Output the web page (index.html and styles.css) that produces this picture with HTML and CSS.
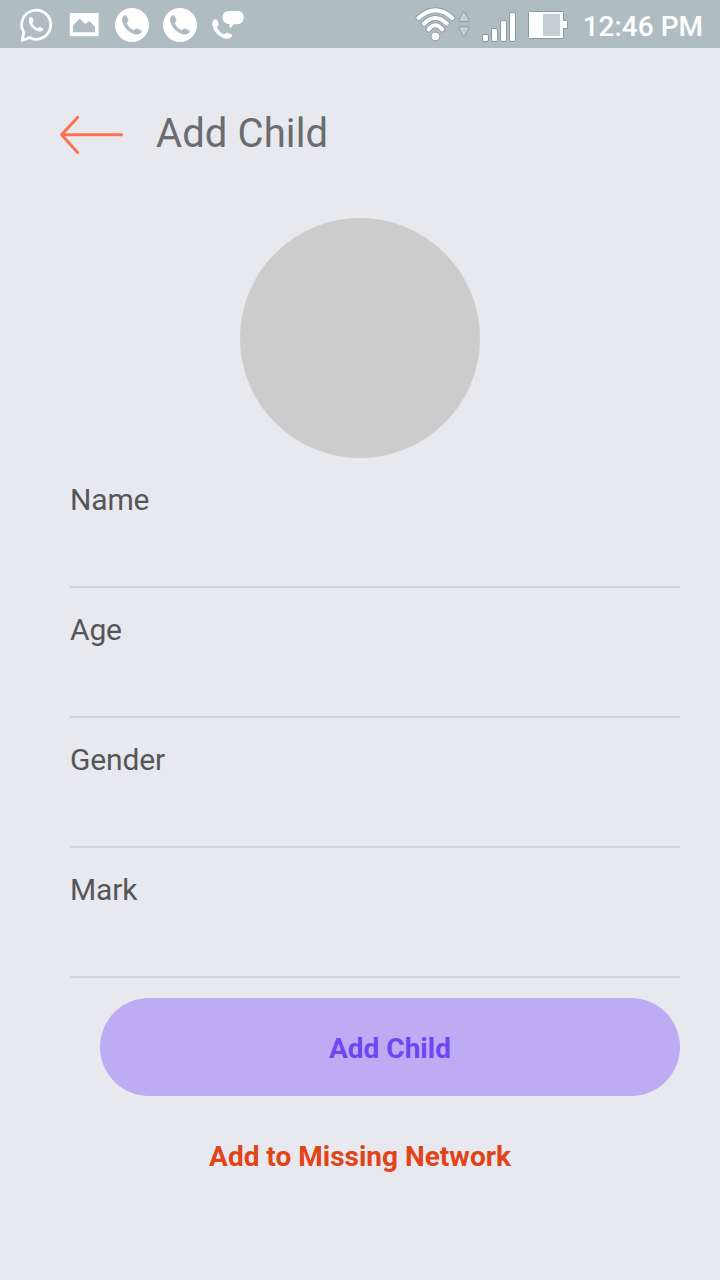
FILE: index.html
```html
<!DOCTYPE html>
<html lang="en">
<head>
<meta charset="utf-8">
<title>Add Child</title>
<link rel="stylesheet" href="styles.css">
</head>
<body>
<svg class="defs" width="0" height="0" aria-hidden="true">
  <symbol id="handset" viewBox="0 0 20 20">
    <path d="M1.8 .7Q4 -.5 4.9 1.4L6.3 4.6Q6.8 5.9 5.6 6.9Q4.5 7.8 5.1 9.1Q7.2 13.3 11 14.8Q12.3 15.2 13 14.3Q14 13.1 15.2 13.6L18.8 15.2Q20.2 16 19.2 17.6Q17.2 20.1 13.6 19.5C6.3 18-.1 10.3 0 4.5Q.1 1.7 1.8 .7Z"/>
  </symbol>
</svg>
<header class="status">
  <div class="status-group notices">
    <svg class="icon" width="36" height="38" viewBox="18 6 36 38">
      <path d="M23.8 32.2A14.5 14.5 0 1 1 29.6 37.6L22.2 40.3Z" fill="none" stroke="#fff" stroke-width="2.8" stroke-linejoin="round"/>
      <use href="#handset" x="28.5" y="16.8" width="15.4" height="15" fill="#fff"/>
    </svg>
    <svg class="icon" width="30" height="38" viewBox="69 6 30 38">
      <path fill="#fff" fill-rule="evenodd" d="M71 13H97.5Q98.7 13 98.7 14.2V35Q98.7 36.2 97.5 36.2H71Q69.8 36.2 69.8 35V14.2Q69.8 13 71 13ZM73 32.3H95V27L90.2 21.7Q89.2 20.8 88.2 21.7L85.2 24L80.7 19.4Q79.6 18.6 78.6 19.4L73 25.5Z"/>
    </svg>
    <svg class="icon" width="34" height="38" viewBox="115 6 34 38">
      <circle cx="132" cy="25" r="17" fill="#fff"/>
      <use href="#handset" x="122" y="15" width="20" height="20" fill="#afbdc2"/>
    </svg>
    <svg class="icon" width="34" height="38" viewBox="115 6 34 38">
      <circle cx="132" cy="25" r="17" fill="#fff"/>
      <use href="#handset" x="122" y="15" width="20" height="20" fill="#afbdc2"/>
    </svg>
    <svg class="icon" width="34" height="38" viewBox="211 6 34 38">
      <use href="#handset" x="212.2" y="19" width="20.2" height="20.2" fill="#fff"/>
      <path fill="#fff" d="M229 11H237.5Q243.7 11.3 243.7 17.4T237.5 24.2H234L229.8 28.2L229.4 24.2Q222.5 23.6 222.5 17.5T229 11Z"/>
    </svg>
  </div>
  <div class="status-group system">
    <svg class="icon" width="56" height="38" viewBox="415 6 56 38">
      <g fill="none" stroke-linecap="round">
        <g stroke="#899a9f" stroke-width="5.8">
          <path d="M418.5 17.9Q435.4 2.7 452.3 17.9"/><path d="M423.9 23.8Q435.4 12.2 446.9 23.8"/><path d="M428.6 29.4Q435.4 21.2 442.2 29.4"/>
        </g>
        <g stroke="#fff" stroke-width="4.1">
          <path d="M418.5 17.9Q435.4 2.7 452.3 17.9"/><path d="M423.9 23.8Q435.4 12.2 446.9 23.8"/><path d="M428.6 29.4Q435.4 21.2 442.2 29.4"/>
        </g>
      </g>
      <circle cx="435.4" cy="36.4" r="4.4" fill="#fff" stroke="#899a9f"/>
      <path d="M463 12Q463.8 11 464.6 12L469.2 20.4Q469.4 21.4 468.4 21.4H459.4Q458.4 21.4 458.6 20.4ZM463 36.2Q463.8 37.2 464.6 36.2L469.2 27.8Q469.4 26.8 468.4 26.8H459.4Q458.4 26.8 458.6 27.8Z" fill="#c5d0d4" stroke="#899a9f" stroke-linejoin="round"/>
    </svg>
    <svg class="icon signal" width="35" height="38" viewBox="481 6 35 38">
      <g fill="#fff" stroke="#899a9f">
        <rect x="482.5" y="34.5" width="6" height="7" rx="1.5"/>
        <rect x="491.5" y="28.5" width="6" height="13" rx="1.5"/>
        <rect x="500.5" y="20.5" width="6" height="21" rx="1.5"/>
        <rect x="509.5" y="12.5" width="6" height="29" rx="1.5"/>
      </g>
    </svg>
    <svg class="icon battery" width="41" height="38" viewBox="528 6 41 38">
      <path d="M529.5 11.5H562.5Q563.5 11.5 563.5 12.5V20.5H566.5Q567.5 20.5 567.5 21.5V28.5H563.5V37.5Q563.5 38.5 562.5 38.5H529.5Q528.5 38.5 528.5 37.5V12.5Q528.5 11.5 529.5 11.5Z" fill="#fff" stroke="#899a9f"/>
      <path d="M543 13.8H560V36H543Z" fill="#c5d0d4"/>
    </svg>
    <span class="clock">12:46 PM</span>
  </div>
</header>
<main class="screen">
  <div class="titlebar">
    <svg class="back" width="64" height="40" viewBox="60 115 64 40">
      <path d="M121.5 134.8H62M77.6 117.4L61.6 134.8L77.6 152.4" fill="none" stroke="#fb7253" stroke-width="3" stroke-linecap="round" stroke-linejoin="round"/>
    </svg>
    <h1 class="title">Add Child</h1>
  </div>
  <div class="avatar"></div>
  <form class="form">
    <div class="field">Name</div>
    <div class="field">Age</div>
    <div class="field">Gender</div>
    <div class="field">Mark</div>
    <button class="submit" type="button">Add Child</button>
  </form>
  <a class="missing">Add to Missing Network</a>
</main>
</body>
</html>
```
FILE: styles.css
```css
* { box-sizing: border-box; }
body {
  margin: 0;
  width: 720px;
  height: 1280px;
  overflow: hidden;
  background: #e8e9ee;
  font-family: Roboto, "Liberation Sans", sans-serif;
}
.defs { display: block; }
.status {
  display: flex;
  justify-content: space-between;
  height: 48px;
  padding: 6px 17px 0 18px;
  background: #afbdc2;
}
.status-group { display: flex; align-items: flex-start; }
.icon { display: block; flex: none; }
.notices { gap: 14px; }
.notices .icon:nth-child(2) { margin-left: 1px; }
.notices .icon:nth-child(3) { margin-left: 2px; }
.signal { margin-left: 10px; }
.battery { margin-left: 12px; }
.clock {
  margin-left: 14px;
  font-size: 28px;
  font-weight: 500;
  line-height: 42px;
  color: #fff;
  white-space: nowrap;
}
.screen { display: flex; flex-direction: column; }
.titlebar {
  display: flex;
  align-items: flex-start;
  gap: 32px;
  height: 170px;
  padding: 62px 0 0 60px;
}
.back { margin-top: 5px; }
.title {
  margin: 0;
  font-size: 40px;
  font-weight: 400;
  line-height: 48px;
  letter-spacing: 0.1px;
  color: #6b6c6e;
}
.avatar {
  align-self: center;
  width: 240px;
  height: 240px;
  border-radius: 50%;
  background: #ccc;
}
.form {
  display: flex;
  flex-direction: column;
  padding: 0 40px 0 70px;
}
.field {
  height: 130px;
  padding-top: 22px;
  border-bottom: 2px solid #d4d3da;
  font-size: 30px;
  line-height: 40px;
  letter-spacing: -0.15px;
  color: #555657;
}
.submit {
  height: 98px;
  margin: 20px 0 0 30px;
  padding: 3px 0 0;
  border: 0;
  border-radius: 49px;
  background: #bdacf3;
  color: #7045f5;
  font: 700 28px/40px Roboto, "Liberation Sans", sans-serif;
}
.missing {
  align-self: center;
  margin-top: 41px;
  font-size: 28px;
  font-weight: 700;
  line-height: 40px;
  color: #e04418;
}
```
